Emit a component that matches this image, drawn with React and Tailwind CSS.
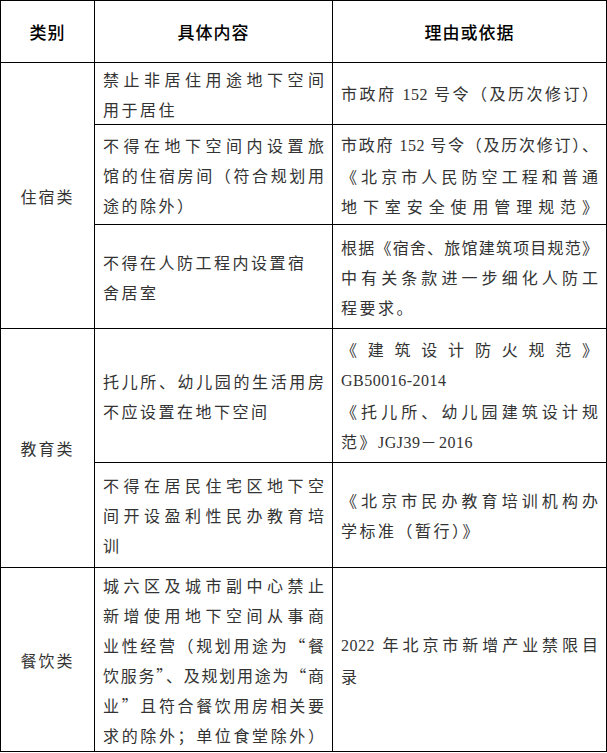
import React from 'react';

// one line of a cell; "full" lines are spread to both edges like Word's distributed text
const Line = ({ full, children }) => (
  <div className={full ? "text-justify [text-align-last:justify] tracking-[0px]" : "text-left tracking-[2.5px]"}>{children}</div>
);

const Num = ({ children }) => (
  <span className="font-['Liberation_Serif',serif] tracking-[0.5px]">{children}</span>
);

const groups = [
  {
    category: "住宿类",
    items: [
      {
        h: "h-[62px]",
        content: [["禁止非居住用途地下空间", true], ["用于居住", false]],
        basis: [[<>市政府 <Num>152</Num> 号令（及历次修订）</>, true]],
      },
      {
        h: "h-[100px]",
        content: [["不得在地下空间内设置旅", true], ["馆的住宿房间（符合规划用", true], ["途的除外）", false]],
        basis: [
          [<>市政府 <Num>152</Num> 号令（及历次修订）、</>, true],
          ["《北京市人民防空工程和普通", true],
          ["地下室安全使用管理规范》", true],
        ],
      },
      {
        h: "h-[104px]",
        content: [["不得在人防工程内设置宿", false], ["舍居室", false]],
        basis: [["根据《宿舍、旅馆建筑项目规范》", true], ["中有关条款进一步细化人防工", true], ["程要求。", false]],
      },
    ],
  },
  {
    category: "教育类",
    items: [
      {
        h: "h-[134px]",
        content: [["托儿所、幼儿园的生活用房", true], ["不应设置在地下空间", false]],
        basis: [
          ["《建筑设计防火规范》", true],
          [<Num>GB50016-2014</Num>, false],
          ["《托儿所、幼儿园建筑设计规", true],
          [<>范》<Num>JGJ39</Num>－<Num>2016</Num></>, false],
        ],
      },
      {
        h: "h-[105px]",
        content: [["不得在居民住宅区地下空", true], ["间开设盈利性民办教育培", true], ["训", false]],
        basis: [["《北京市民办教育培训机构办", true], ["学标准（暂行）》", false]],
      },
    ],
  },
  {
    category: "餐饮类",
    items: [
      {
        h: "h-[184px]",
        content: [
          ["城六区及城市副中心禁止", true],
          ["新增使用地下空间从事商", true],
          ["业性经营（规划用途为“餐", true],
          ["饮服务”、及规划用途为“商", true],
          ["业”且符合餐饮用房相关要", true],
          ["求的除外；单位食堂除外）", true],
        ],
        basis: [[<><Num>2022</Num> 年北京市新增产业禁限目</>, true], ["录", false]],
      },
    ],
  },
];

export default function App() {
  return (
    <div className="w-[607px] h-[753px] bg-white font-['Noto_Sans_CJK_SC',sans-serif]">
      <table className="w-[607px] table-fixed border-collapse">
        <colgroup>
          <col className="w-[94px]" />
          <col className="w-[238px]" />
          <col />
        </colgroup>
        <thead>
          <tr className="h-[62px]">
            {["类别", "具体内容", "理由或依据"].map((t) => (
              <th key={t} className="border border-black text-center align-middle text-[17px] font-medium tracking-[1px] text-black">
                {t}
              </th>
            ))}
          </tr>
        </thead>
        <tbody>
          {groups.map((g) =>
            g.items.map((item, i) => (
              <tr key={g.category + i} className={item.h}>
                {i === 0 && (
                  <td rowSpan={g.items.length} className="border border-black text-center align-middle text-[16px] tracking-[2px] text-[#333]">
                    {g.category}
                  </td>
                )}
                <td className="border border-black align-middle pl-[8px] pr-[8px] text-[16px] leading-[30px] text-[#333]">
                  {item.content.map(([t, full], k) => (
                    <Line key={k} full={full}>{t}</Line>
                  ))}
                </td>
                <td className="border border-black align-middle pl-[8px] pr-[8px] text-[16px] leading-[30px] text-[#333]">
                  {item.basis.map(([t, full], k) => (
                    <Line key={k} full={full}>{t}</Line>
                  ))}
                </td>
              </tr>
            ))
          )}
        </tbody>
      </table>
    </div>
  );
}
